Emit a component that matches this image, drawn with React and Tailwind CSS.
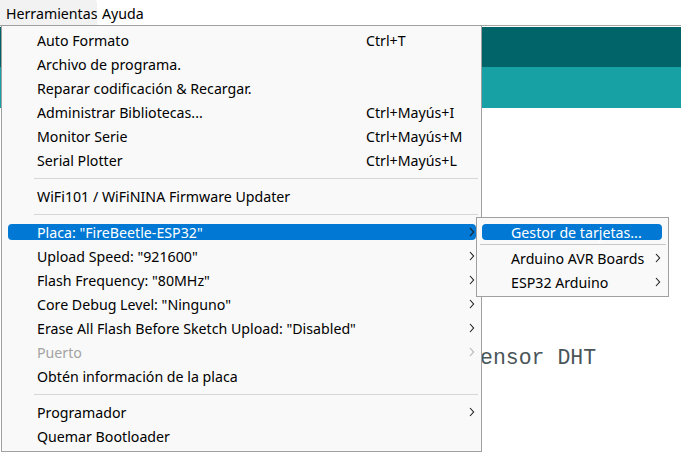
import React from 'react';

const FONT = { fontFamily: '"Noto Sans", "Open Sans", sans-serif' };

const MAIN_ITEMS = [
  { label: 'Auto Formato', shortcut: 'Ctrl+T' },
  { label: 'Archivo de programa.' },
  { label: 'Reparar codificación & Recargar.' },
  { label: 'Administrar Bibliotecas...', shortcut: 'Ctrl+Mayús+I' },
  { label: 'Monitor Serie', shortcut: 'Ctrl+Mayús+M' },
  { label: 'Serial Plotter', shortcut: 'Ctrl+Mayús+L' },
  { sep: true },
  { label: 'WiFi101 / WiFiNINA Firmware Updater' },
  { sep: true },
  { label: 'Placa: "FireBeetle-ESP32"', arrow: true, active: true },
  { label: 'Upload Speed: "921600"', arrow: true },
  { label: 'Flash Frequency: "80MHz"', arrow: true },
  { label: 'Core Debug Level: "Ninguno"', arrow: true },
  { label: 'Erase All Flash Before Sketch Upload: "Disabled"', arrow: true },
  { label: 'Puerto', arrow: true, disabled: true },
  { label: 'Obtén información de la placa' },
  { sep: true },
  { label: 'Programador', arrow: true },
  { label: 'Quemar Bootloader' },
];

function Chevron({ color = '#1a1a1a' }) {
  return (
    <svg width="6" height="10" viewBox="0 0 6 10" className="shrink-0">
      <path d="M1 1 L4.6 5 L1 9" fill="none" stroke={color} strokeWidth="1.1" />
    </svg>
  );
}

function MainRow({ item }) {
  if (item.sep) {
    return (
      <div className="h-3 flex items-center pl-8 pr-[3px]">
        <div className="h-px w-full bg-[#d7d7d7]" />
      </div>
    );
  }
  const textColor = item.active ? 'text-white' : item.disabled ? 'text-[#a3a3a3]' : 'text-black';
  return (
    <div className="h-6 py-1 pl-1.5 pr-[5px]">
      <div
        className={`h-4 flex items-center pl-[29px] pr-[1px] rounded-[4px] ${item.active ? 'bg-[#0078d4]' : ''} ${textColor}`}
      >
        <span className="w-[329px] shrink-0 whitespace-nowrap pt-[2px]">{item.label}</span>
        <span className="whitespace-nowrap pt-[2px]">{item.shortcut}</span>
        {item.arrow && (
          <span className="ml-auto">
            <Chevron color={item.disabled ? '#b0b0b0' : '#1a1a1a'} />
          </span>
        )}
      </div>
    </div>
  );
}

function SubRow({ label, arrow, active }) {
  return (
    <div className="h-6 py-1 pl-[5px] pr-[6px]">
      <div
        className={`h-4 flex items-center pl-[29px] pr-[1px] rounded-[4px] ${active ? 'bg-[#0078d4] text-white' : 'text-black'}`}
      >
        <span className="whitespace-nowrap pt-[2px]">{label}</span>
        {arrow && (
          <span className="ml-auto">
            <Chevron />
          </span>
        )}
      </div>
    </div>
  );
}

export default function App() {
  return (
    <div className="relative w-[681px] h-[460px] bg-white overflow-hidden text-[14.2px] leading-none" style={FONT}>
      {/* menu bar */}
      <div className="h-[25px] flex items-center">
        <div className="h-[25px] w-[97px] shrink-0 flex items-center pl-[6px] pt-[3px] bg-[#f2f2f2] rounded-tr-[3px] whitespace-nowrap">
          Herramientas
        </div>
        <div className="pl-[5px] pt-[3px]">Ayuda</div>
      </div>
      <div className="h-px bg-[#a5a5a5]" />
      <div className="h-px bg-white" />

      {/* editor toolbar / tabs behind the menu */}
      <div className="h-10 bg-[#006468]" />
      <div className="h-[41px] bg-[#17a1a5]" />

      {/* editor text peeking out */}
      <div className="pt-[240px] pl-[480px]">
        <span
          className="text-[21.5px] leading-none text-[#4a5559] whitespace-pre"
          style={{ fontFamily: '"Liberation Mono", "Courier New", monospace' }}
        >
          ensor DHT
        </span>
      </div>

      {/* Herramientas dropdown */}
      <div className="absolute left-[1px] top-[25px] w-[481px] h-[427px] bg-[#f9f9f9] border border-[#a0a0a0] pt-[2px]">
        {MAIN_ITEMS.map((item, i) => (
          <MainRow key={i} item={item} />
        ))}
      </div>

      {/* Placa submenu */}
      <div className="absolute left-[476px] top-[217px] w-[193px] h-[80px] bg-[#f9f9f9] border border-[#a0a0a0] pt-[2px]">
        <SubRow label="Gestor de tarjetas..." active />
        <div className="h-[2px] pl-[3px] pr-[2px]">
          <div className="h-px w-full bg-[#c8c8c8]" />
        </div>
        <SubRow label="Arduino AVR Boards" arrow />
        <SubRow label="ESP32 Arduino" arrow />
      </div>
    </div>
  );
}
